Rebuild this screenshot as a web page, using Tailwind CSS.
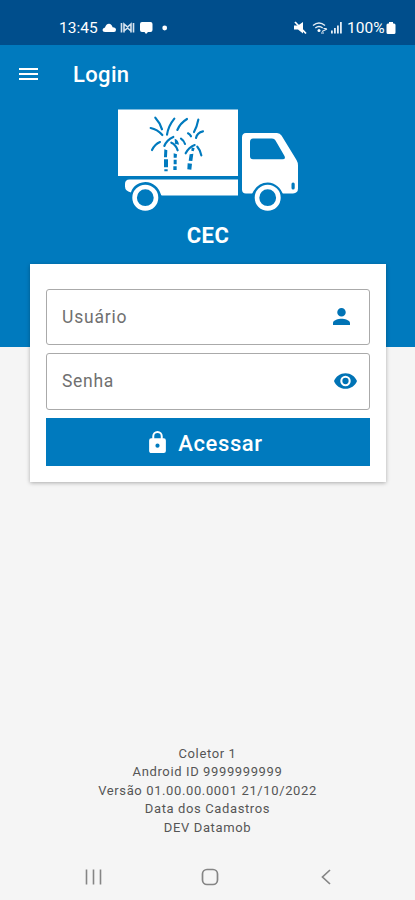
<!DOCTYPE html>
<html lang="pt-BR">
<head>
<meta charset="utf-8">
<title>Login</title>
<script src="https://cdn.jsdelivr.net/npm/@tailwindcss/browser@4"></script>
</head>
<body class="bg-[#f5f5f5]">
<div class="flex h-[900px] w-[415px] flex-col overflow-hidden bg-[#f5f5f5] font-[Roboto,sans-serif]">
  <div class="h-[347px] shrink-0 bg-[#007abe]">
    <div class="flex h-[45px] items-center justify-between bg-[#004e8c] pt-[11px] pr-[19px] pl-[59px] text-white">
      <div class="flex items-center">
        <span class="w-[43px] text-[15.5px] leading-4 whitespace-nowrap">13:45</span>
        <svg class="h-4 w-[66px]" viewBox="102 20 66 16" fill="#fff">
          <path d="M105 32q-2.500 0-2.500-2t2.500-2.500q1-3.800 4-3.800 2.600 0 3.600 3.500 3.400.3 3.400 2.500 0 2.300-2 2.300z"/>
          <path d="M121.500 23v9.500M133.500 23v9.500M124 32.500v-8.500l3.500 3 3.500-3v8.500M124 31l3.500-3 3.500 3" fill="none" stroke="#d5e3ef" stroke-width="1.600"/>
          <path d="M142 22h8.500q2 0 2 2v6q0 2-2 2h-2.500l-2 2-1.500-2H142q-2 0-2-2v-6q0-2 2-2z"/>
          <circle cx="164.700" cy="28" r="2.400"/>
        </svg>
      </div>
      <div class="flex items-center">
        <svg class="h-4 w-[54px]" viewBox="293 20 54 16" fill="#fff">
          <path d="M294 25.500h4l5-3.500v11.500l-5-4h-4z"/>
          <path d="m295 22 11 11.500" stroke="#fff" stroke-width="1.800"/>
          <g fill="none" stroke="#e3edf5" stroke-width="1.400"><path d="M313 25.500q6-5 12 0M315.300 28q3.700-3 7.400 0"/><path d="M322 31.500l5-2.500M321 33h3M323.500 28.500h3" stroke-width="1.200"/></g>
          <circle cx="319" cy="30.500" r="1.500"/>
          <path fill="#e3edf5" d="M331 30.500h1.800v3H331zM334 28h1.800v5.500H334zM337 25.500h1.800v8H337zM340 22h1.800v11.500H340z"/>
        </svg>
        <span class="w-[39px] text-[15.5px] leading-4 whitespace-nowrap">100%</span>
        <svg class="h-[14px] w-[10px]" viewBox="0 0 10 14" fill="#fff"><path d="M3 1h4v1.500h1q1.500 0 1.500 1.500v7.500Q9.500 13 8 13H2Q.5 13 .5 11.500V4Q.5 2.500 2 2.500h1z"/></svg>
      </div>
    </div>
    <header class="flex h-[60px] items-center pl-[19px] text-white">
      <svg class="mb-[3px] h-[14px] w-[20px]" viewBox="0 0 20 14" fill="#fff"><path d="M0 1h19v2H0zM0 6h19v2H0zM0 11h19v2H0z"/></svg>
      <h1 class="ml-[34px] text-[22px] leading-7 font-medium tracking-[0.35px]">Login</h1>
    </header>
    <div class="flex flex-col items-center">
      <svg class="mt-[3px] h-[106px] w-[184px]" viewBox="116 108 184 106">
        <path fill="#fff" d="M118 109.500h120V176H118z"/>
        <path fill="#fff" d="M129.500 179.500h108.500v16h-76q-2-.5-3-3H131q-6-1.500-6-6v-2.500q0-4.500 4.500-4.500z"/>
        <path fill="#fff" d="M246 133h31q3 0 4.500 2.500L296.500 160q1.500 2.500 1.500 5.500v23q0 4.500-5 5h-47q-4 0-4-4v-52q0-4.500 4-4.500z"/>
        <path fill="#007abe" d="M253 138.500h19q2.500 0 3.500 2l9 15.500q1.500 3.300-2 3.300h-29.500q-3 0-3-3v-14.300q0-3.500 3-3.500z"/>
        <rect x="291.500" y="182.500" width="3.200" height="7" rx="1.500" fill="#007abe"/>
        <g fill="#007abe"><path d="M130 196q2-13 15.300-14 12 .5 16 13.500l-4 6h-24zM251 196q5-13 16.700-13.500 11.500.5 16 13.500l-4 5h-24z"/></g>
        <g fill="#007abe" stroke="#fff" stroke-width="4.600"><circle cx="145.300" cy="197.700" r="10.700"/><circle cx="267.700" cy="197.700" r="10.700"/></g>
        <g transform="translate(146 110) scale(.3333)" fill="#007abe" stroke="#007abe">
          <path fill="none" stroke-width="6.500" stroke-linecap="round" d="M28 23Q42 38 48 58M14 54Q34 58 49 75M85 26Q67 48 63 74M123 27Q102 40 94 60M157 29Q153 50 144 66M171 64Q153 68 150 84M18 120Q27 102 42 96M55 108Q62 90 82 81M76 98Q90 104 95 121M105 86Q114 92 117 102M126 70Q132 73 135 79M119 130Q128 112 146 105M154 110Q163 120 166 136"/>
          <path stroke="none" d="M86 86q11 3 13 18l-12-3zM55 118l9 3-1 21h-9zM54 148h12v24H54zM55 178h10v6H55zM83 130l10 3-1 10h-9zM83 149h9v14h-9zM82 169h10v11H82zM131 133l11-2-3 22-11-1zM125 160l13 1-2 18-12-1zM137 112l9 3-3 9-7-2z"/>
        </g>
      </svg>
      <h2 class="mt-[8px] ml-[1px] text-[22px] leading-7 font-bold tracking-[0.4px]">
        <span class="text-white">CEC</span>
      </h2>
    </div>
  </div>
  <main class="relative -mt-[83px] ml-[30px] flex h-[218px] w-[356px] shrink-0 flex-col bg-white px-[16px] pt-[25px] shadow-[0_1px_4px_rgba(0,0,0,0.3)]">
    <label class="flex h-[56px] items-center justify-between rounded-[3px] border border-[#aaa] pr-[16px] pl-[15px] text-[17.5px] tracking-[0.8px] text-[#707070]">
      <span>Usuário</span>
      <svg class="mr-[3px] mb-[1px] h-[17px] w-[17px]" viewBox="4 4 16 16" fill="#0073b5"><path d="M12 12a4 4 0 1 0 0-8 4 4 0 0 0 0 8zm0 2c-2.700 0-8 1.300-8 4v2h16v-2c0-2.700-5.300-4-8-4z"/></svg>
    </label>
    <label class="mt-2 flex h-[57px] items-center justify-between rounded-[3px] border border-[#aaa] pr-[12px] pl-[15px] text-[17.5px] tracking-[0.7px] text-[#707070]">
      <span>Senha</span>
      <svg class="mb-[2px] h-[16px] w-[23px]" viewBox="1 4.500 22 15" fill="#0073b5"><path d="M12 4.500C7 4.500 2.700 7.600 1 12c1.700 4.400 6 7.500 11 7.500s9.300-3.100 11-7.500c-1.700-4.400-6-7.500-11-7.500zM12 17a5 5 0 1 1 0-10 5 5 0 0 1 0 10zm0-8a3 3 0 1 0 0 6 3 3 0 0 0 0-6z"/></svg>
    </label>
    <button class="mt-2 flex h-[48px] items-center justify-center bg-[#007abe] pt-[3px] pr-[4px] text-[22px] font-medium tracking-[0.6px] text-white">
      <svg class="mr-[12px] mb-[4px] h-[22px] w-[17px]" viewBox="4 1 16 21" fill="#fff"><path fill-rule="evenodd" d="M18 8h-1V6A5 5 0 0 0 7 6v2H6a2 2 0 0 0-2 2v10c0 1.100.9 2 2 2h12a2 2 0 0 0 2-2V10a2 2 0 0 0-2-2zm-6 9a2 2 0 1 1 0-4 2 2 0 0 1 0 4zm3.100-9H8.900V6a3.100 3.100 0 0 1 6.200 0z"/></svg>
      <span>Acessar</span>
    </button>
  </main>
  <footer class="mt-auto flex h-[155px] shrink-0 flex-col justify-between">
    <div class="text-center text-[13px] leading-[18.400px] tracking-[0.62px] text-[#555]">
      <p>Coletor 1</p>
      <p>Android ID 9999999999</p>
      <p>Versão 01.00.00.0001 21/10/2022</p>
      <p>Data dos Cadastros</p>
      <p>DEV Datamob</p>
    </div>
    <nav class="mb-[13px] flex h-[20px] items-center justify-between pr-[83px] pl-[85px]">
      <svg class="h-[18px] w-[17px]" viewBox="0 0 17 18" stroke="#858585" stroke-width="1.600"><path d="M1.500 1.500v15M8.500 1.500v15M15.500 1.500v15"/></svg>
      <svg class="mr-[3px] h-[18px] w-[18px]" viewBox="0 0 18 18" fill="none" stroke="#858585" stroke-width="1.700"><rect x="1.500" y="1.500" width="15" height="15" rx="4.500"/></svg>
      <svg class="h-[18px] w-[12px]" viewBox="0 0 12 18" fill="none" stroke="#858585" stroke-width="1.700"><path d="M10 2 2.500 9l7.500 7"/></svg>
    </nav>
  </footer>
</div>
</body>
</html>
